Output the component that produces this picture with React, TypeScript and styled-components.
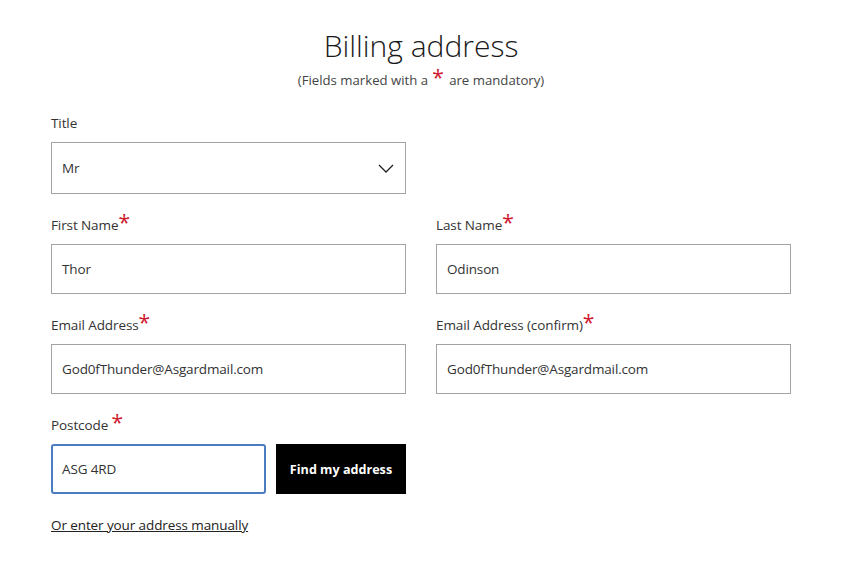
import React from "react";
import styled, { createGlobalStyle } from "styled-components";

const GlobalStyle = createGlobalStyle`
  body {
    margin: 0;
    background: #fff;
    font-family: "Open Sans", "Liberation Sans", sans-serif;
    color: #333;
  }
`;

const Page = styled.div`
  width: 740px;
  padding: 28px 0 40px 51px;
`;

const Header = styled.header`
  display: flex;
  flex-direction: column;
  align-items: center;
  gap: 6px;
  margin-bottom: 23px;
`;

const Heading = styled.h1`
  margin: 0;
  font-size: 30px;
  line-height: 36px;
  font-weight: 300;
  color: #1a1a1a;
`;

const Note = styled.p`
  margin: 0;
  font-size: 13.2px;
  line-height: 20px;
  color: #444;
`;

const Star = styled.span<{ $spaced?: boolean }>`
  color: #d0182f;
  font-size: 21px;
  line-height: 0;
  margin-left: ${(p) => (p.$spaced ? "4px" : "0")};
  margin-right: ${(p) => (p.$spaced ? "2px" : "0")};
`;

const Grid = styled.div`
  display: grid;
  grid-template-columns: 355px 355px;
  column-gap: 30px;
  row-gap: 21px;
`;

const Field = styled.div<{ $full?: boolean }>`
  display: flex;
  flex-direction: column;
  gap: 9px;
  grid-column: ${(p) => (p.$full ? "1 / span 2" : "auto")};
`;

const Label = styled.label`
  font-size: 13.5px;
  letter-spacing: -0.1px;
  line-height: 20px;
  color: #333;
`;

const Box = styled.div<{ $focused?: boolean }>`
  box-sizing: border-box;
  height: 50px;
  display: flex;
  align-items: center;
  justify-content: space-between;
  padding: 0 ${(p) => (p.$focused ? "9px" : "10px")};
  border: ${(p) => (p.$focused ? "2px solid #4a7cc0" : "1px solid #a3a3a3")};
  border-radius: ${(p) => (p.$focused ? "3px" : "0")};
  font-size: 13.5px;
  letter-spacing: -0.15px;
  color: #333;
  background: #fff;
`;

const SelectBox = styled(Box)`
  width: 355px;
  height: 52px;
  padding-right: 11px;
`;

const PostRow = styled.div`
  display: flex;
  gap: 10px;
`;

const PostInput = styled(Box)`
  width: 215px;
`;

const FindButton = styled.button`
  width: 130px;
  height: 50px;
  border: none;
  background: #000;
  color: #fff;
  font-family: "Open Sans", "Liberation Sans", sans-serif;
  font-weight: 700;
  font-size: 12.6px;
  cursor: pointer;
`;

const ManualLink = styled.a`
  display: inline-block;
  margin-top: 21px;
  font-size: 13.5px;
  letter-spacing: -0.1px;
  line-height: 20px;
  color: #222;
  text-decoration: underline;
`;

function Chevron() {
  return (
    <svg width="16" height="9" viewBox="0 0 16 9" fill="none">
      <path d="M1 1l7 7 7-7" stroke="#222" strokeWidth="1.3" />
    </svg>
  );
}

export default function App() {
  return (
    <Page>
      <GlobalStyle />
      <Header>
        <Heading>Billing address</Heading>
        <Note>
          (Fields marked with a<Star $spaced>*</Star> are mandatory)
        </Note>
      </Header>

      <Grid>
        <Field $full>
          <Label>Title</Label>
          <SelectBox>
            Mr
            <Chevron />
          </SelectBox>
        </Field>

        <Field>
          <Label>
            First Name<Star>*</Star>
          </Label>
          <Box>Thor</Box>
        </Field>
        <Field>
          <Label>
            Last Name<Star>*</Star>
          </Label>
          <Box>Odinson</Box>
        </Field>

        <Field>
          <Label>
            Email Address<Star>*</Star>
          </Label>
          <Box>God0fThunder@Asgardmail.com</Box>
        </Field>
        <Field>
          <Label>
            Email Address (confirm)<Star>*</Star>
          </Label>
          <Box>God0fThunder@Asgardmail.com</Box>
        </Field>

        <Field $full>
          <Label>
            Postcode <Star>*</Star>
          </Label>
          <PostRow>
            <PostInput $focused>ASG 4RD</PostInput>
            <FindButton>Find my address</FindButton>
          </PostRow>
        </Field>
      </Grid>

      <ManualLink href="#">Or enter your address manually</ManualLink>
    </Page>
  );
}
